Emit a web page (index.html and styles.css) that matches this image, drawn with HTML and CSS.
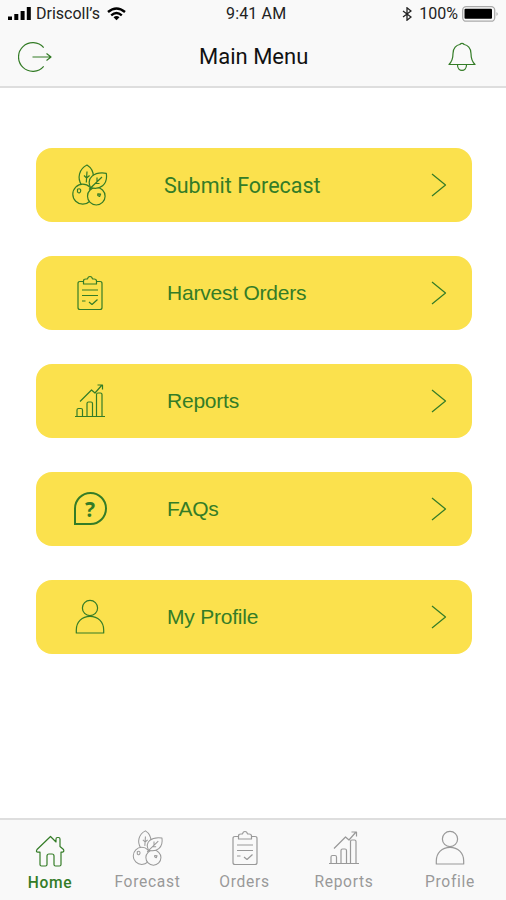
FILE: index.html
```html
<!DOCTYPE html>
<html lang="en">
  <head>
    <meta charset="UTF-8" />
    <meta name="viewport" content="width=device-width, initial-scale=1" />
    <title>Main Menu</title>
    <link rel="stylesheet" href="styles.css">
  </head>
  <body>
    <!-- Shared icons -->
    <svg class="sprite" aria-hidden="true">
      <symbol id="berries" viewBox="0 0 36 42">
        <path d="M9.500 21C5 14 7 5 15 1c4 2.500 6.500 6.500 6.500 12" />
        <circle class="cover" cx="10.8" cy="30.2" r="10" />
        <circle class="cover" cx="24.300" cy="32.2" r="8.8" />
        <path class="cover" d="M18.500 23.500C14 14 22 7.500 34.300 9.300C36 20.500 28 26.500 18.500 23.500Z" />
        <path d="M14.300 18.500 15 7.500M12 11.500l2.600 2.500 3-2.500M17 25.500 30 13M25 13.500v4M23 19.500h4.500" />
        <path d="M5.500 25.200c1.800-1 3.500-.2 3.200 1.800S6.500 29.500 5.500 28Z" />
        <path d="M25.800 29.800l2.800.3-1 2.300-1.800-1Z" />
      </symbol>
      <symbol id="clipboard" viewBox="0 0 26 36">
        <path d="M6.500 6.500H3Q1 6.500 1 8.500v24Q1 34.500 3 34.500H23Q25 34.500 25 32.500v-24Q25 6.500 23 6.500H19.500" />
        <path d="M6.500 9V6Q6.500 4 9 4h1.500q.5-2.500 2.500-2.500T15.500 4H17q2.500 0 2.500 2v3Z" />
        <path d="M5 15H21M5 20.500H21M5 26h3.500M12 27l3 2.500 5.500-5" />
      </symbol>
      <symbol id="chart" viewBox="0 0 30 36">
        <path d="M0 33.500H30M2 33V27Q2 25.500 3.500 25.500H6Q7.500 25.500 7.500 27V33M12 33V20.500Q12 19 13.500 19H16Q17.500 19 17.500 20.500V33M21.500 33V11.500Q21.500 10 23 10H25.500Q27 10 27 11.500V33" />
        <path d="M5 18.500 16.500 7l3.500 3 7-8M22.500 2H27.500V6.500" />
      </symbol>
      <symbol id="person" viewBox="0 0 30 36">
        <circle cx="15" cy="9" r="7.600" />
        <path d="M1.300 34V31C1.300 23 7 17.300 15 17.300S28.700 23 28.700 31V34Z" />
      </symbol>
      <symbol id="arrow" viewBox="0 0 16 24">
        <path d="M1 1 14.500 12 1 23" />
      </symbol>
    </svg>

    <header class="header">
      <div class="status">
        <div class="carrier">
          <svg class="bars" viewBox="0 0 23 14">
            <path d="M0 9.500h4V13H0zM6.300 7h4v6h-4zM12.600 4h4v9h-4zM18.800 0h4v13h-4z" />
          </svg>
          <span class="carrier-name">Driscoll’s</span>
          <svg class="wifi" viewBox="0 0 19 14">
            <path d="M1 5Q9.500-2.200 18 5M4.200 8.300Q9.500 3.800 14.800 8.300" />
            <path class="dot" d="M6.500 10.300Q9.500 7.800 12.500 10.300L9.500 13.300Z" />
          </svg>
        </div>
        <span class="time">9:41 AM</span>
        <div class="power">
          <svg class="bluetooth" viewBox="0 0 10 14">
            <path d="M1 4 9 10 5 13.200V.8L9 4 1 10" />
          </svg>
          <span class="percent">100%</span>
          <svg class="battery" viewBox="0 0 37 16">
            <rect class="case" x=".7" y=".7" width="32" height="14.500" rx="3.500" />
            <rect x="2.500" y="2.800" width="27.500" height="10" rx="1" />
            <path class="nub" d="M34.500 6q2.500 2 0 4z" />
          </svg>
        </div>
      </div>
      <div class="titlebar">
        <svg class="icon logout" viewBox="0 0 34 30">
          <path d="M25.700 5.700A14.300 14.300 0 1 0 25.700 24.300M14.500 15H33M28.500 11.500 33 15l-4.500 3.500" />
        </svg>
        <h1>Main Menu</h1>
        <svg class="icon bell" viewBox="0 0 28 30">
          <path d="M1 22.500C4 19.500 5 17 5 11.500S8.500 3 11.800 2.500Q14 .3 16.200 2.500C19.500 3 23 6 23 11.500S24 19.500 27 22.500ZM9.500 22.800c0 7.500 9 7.500 9 0" />
        </svg>
      </div>
    </header>

    <main class="menu">
      <a class="card forecast" href="#">
        <svg class="icon berries"><use href="#berries" /></svg>
        <span class="label">Submit Forecast</span>
        <svg class="icon arrow"><use href="#arrow" /></svg>
      </a>
      <a class="card orders" href="#">
        <svg class="icon clipboard"><use href="#clipboard" /></svg>
        <span class="label">Harvest Orders</span>
        <svg class="icon arrow"><use href="#arrow" /></svg>
      </a>
      <a class="card reports" href="#">
        <svg class="icon chart"><use href="#chart" /></svg>
        <span class="label">Reports</span>
        <svg class="icon arrow"><use href="#arrow" /></svg>
      </a>
      <a class="card faqs" href="#">
        <span class="bubble">?</span>
        <span class="label">FAQs</span>
        <svg class="icon arrow"><use href="#arrow" /></svg>
      </a>
      <a class="card profile" href="#">
        <svg class="icon person"><use href="#person" /></svg>
        <span class="label">My Profile</span>
        <svg class="icon arrow"><use href="#arrow" /></svg>
      </a>
    </main>

    <nav class="tabs">
      <a class="tab active" href="#">
        <svg class="icon house" viewBox="0 0 30 32">
          <path d="M15.500 1.500 2 14.500Q.5 17.200 3 17.200H5V29.500Q5 31 6.500 31h4Q12 31 12 29.500V21Q12 19 14 19h3Q19 19 19 21v8.500Q19 31 20.500 31h4Q26 31 26 29.500V17.200h1.500Q29.500 16.500 28.500 14.500L25 11.500V4Q25 2.500 23.500 2.500H22.500Q21 2.500 21 4V7Z" />
        </svg>
        <span>Home</span>
      </a>
      <a class="tab" href="#">
        <svg class="icon berries"><use href="#berries" /></svg>
        <span>Forecast</span>
      </a>
      <a class="tab" href="#">
        <svg class="icon clipboard"><use href="#clipboard" /></svg>
        <span>Orders</span>
      </a>
      <a class="tab" href="#">
        <svg class="icon chart"><use href="#chart" /></svg>
        <span>Reports</span>
      </a>
      <a class="tab" href="#">
        <svg class="icon person"><use href="#person" /></svg>
        <span>Profile</span>
      </a>
    </nav>
  </body>
</html>
```
FILE: styles.css
```css
:root {
  --clr-green: #347c27;
  --clr-yellow: #fbe14d;
  --clr-bar: #f9f9f9;
  --clr-line: #dedede;
  --clr-muted: #999;
}

* {
  box-sizing: border-box;
}

body {
  margin: 0;
  height: 900px;
  display: flex;
  flex-direction: column;
  background: #fff;
  font-family: Roboto, "Liberation Sans", sans-serif;
  overflow: hidden;
}

a {
  color: inherit;
  text-decoration: none;
}

.sprite {
  position: absolute;
  width: 0;
  height: 0;
}

.icon {
  flex: none;
  fill: none;
  stroke: currentColor;
  stroke-width: 1.2;
  stroke-linejoin: round;
}

/* Header */
.header {
  height: 88px;
  background: var(--clr-bar);
  border-bottom: 2px solid var(--clr-line);
}

.status {
  height: 28px;
  padding: 0 7px 0 8px;
  display: grid;
  grid-template-columns: 218px 1fr auto;
  align-items: center;
  font-size: 16px;
  line-height: 28px;
  color: #222;
}

.carrier,
.power {
  display: flex;
  align-items: center;
}

.bars {
  width: 23px;
  height: 14px;
  margin-right: 5px;
}

.carrier-name {
  width: 71px;
}

.wifi {
  width: 19px;
  height: 14px;
  fill: none;
  stroke: #000;
  stroke-width: 2.4;
}

.wifi .dot {
  fill: #000;
  stroke: none;
}

.time {
  letter-spacing: 0.15px;
}

.bluetooth {
  width: 10px;
  height: 14px;
  margin-right: 7px;
  fill: none;
  stroke: #222;
  stroke-width: 1.3;
}

.battery {
  width: 37px;
  height: 16px;
  margin-left: 4px;
}

.battery .case {
  fill: none;
  stroke: #aaa;
  stroke-width: 1.3;
}

.battery .nub {
  fill: #aaa;
}

.titlebar {
  height: 58px;
  padding: 0 30px 0 18px;
  display: grid;
  grid-template-columns: 181px 1fr 28px;
  align-items: center;
  color: var(--clr-green);
}

.titlebar h1 {
  margin: 0 0 1px;
  color: #111;
  font-size: 22px;
  font-weight: 400;
}

.logout {
  width: 34px;
  height: 30px;
}

.bell {
  width: 28px;
  height: 30px;
}

/* Menu */
.menu {
  flex: 1;
  padding: 60px 34px 0 36px;
  display: flex;
  flex-direction: column;
  gap: 33.9px;
}

.card {
  --clr-cover: var(--clr-yellow);
  height: 74px;
  padding: 0 25px 0 24px;
  display: grid;
  grid-template-columns: 60px 1fr 16px;
  column-gap: 47px;
  align-items: center;
  border-radius: 16px;
  background: var(--clr-yellow);
  color: var(--clr-green);
  font-family: "Liberation Sans", Arial, sans-serif;
  font-size: 21px;
  letter-spacing: -0.22px;
}

.card > :first-child {
  justify-self: center;
}

.forecast {
  column-gap: 44px;
  font-family: Roboto, sans-serif;
  font-size: 21.5px;
  letter-spacing: 0;
}

.berries {
  width: 36px;
  height: 42px;
}

.cover {
  fill: var(--clr-cover);
}

.clipboard {
  width: 26px;
  height: 36px;
}

.chart,
.person {
  width: 30px;
  height: 36px;
}

.arrow {
  width: 16px;
  height: 24px;
}

.bubble {
  width: 33px;
  height: 33px;
  border: 2px solid currentColor;
  border-radius: 50% 50% 50% 0;
  font: bold 21px/30px "Noto Sans", sans-serif;
  text-align: center;
}

/* Bottom tabs */
.tabs {
  --clr-cover: var(--clr-bar);
  height: 82px;
  padding-top: 10px;
  display: grid;
  grid-template-columns: 100px 95px 99px 100px 112px;
  background: var(--clr-bar);
  border-top: 2px solid var(--clr-line);
}

.tab {
  display: flex;
  flex-direction: column;
  align-items: center;
  gap: 6px;
  color: var(--clr-muted);
  font-size: 15.6px;
  line-height: 20px;
  letter-spacing: 0.7px;
}

.tab.active {
  padding-top: 5px;
  color: var(--clr-green);
  font-weight: 500;
}

.tab .berries {
  width: 32px;
  height: 36px;
}

.house {
  width: 30px;
  height: 32px;
}
```
